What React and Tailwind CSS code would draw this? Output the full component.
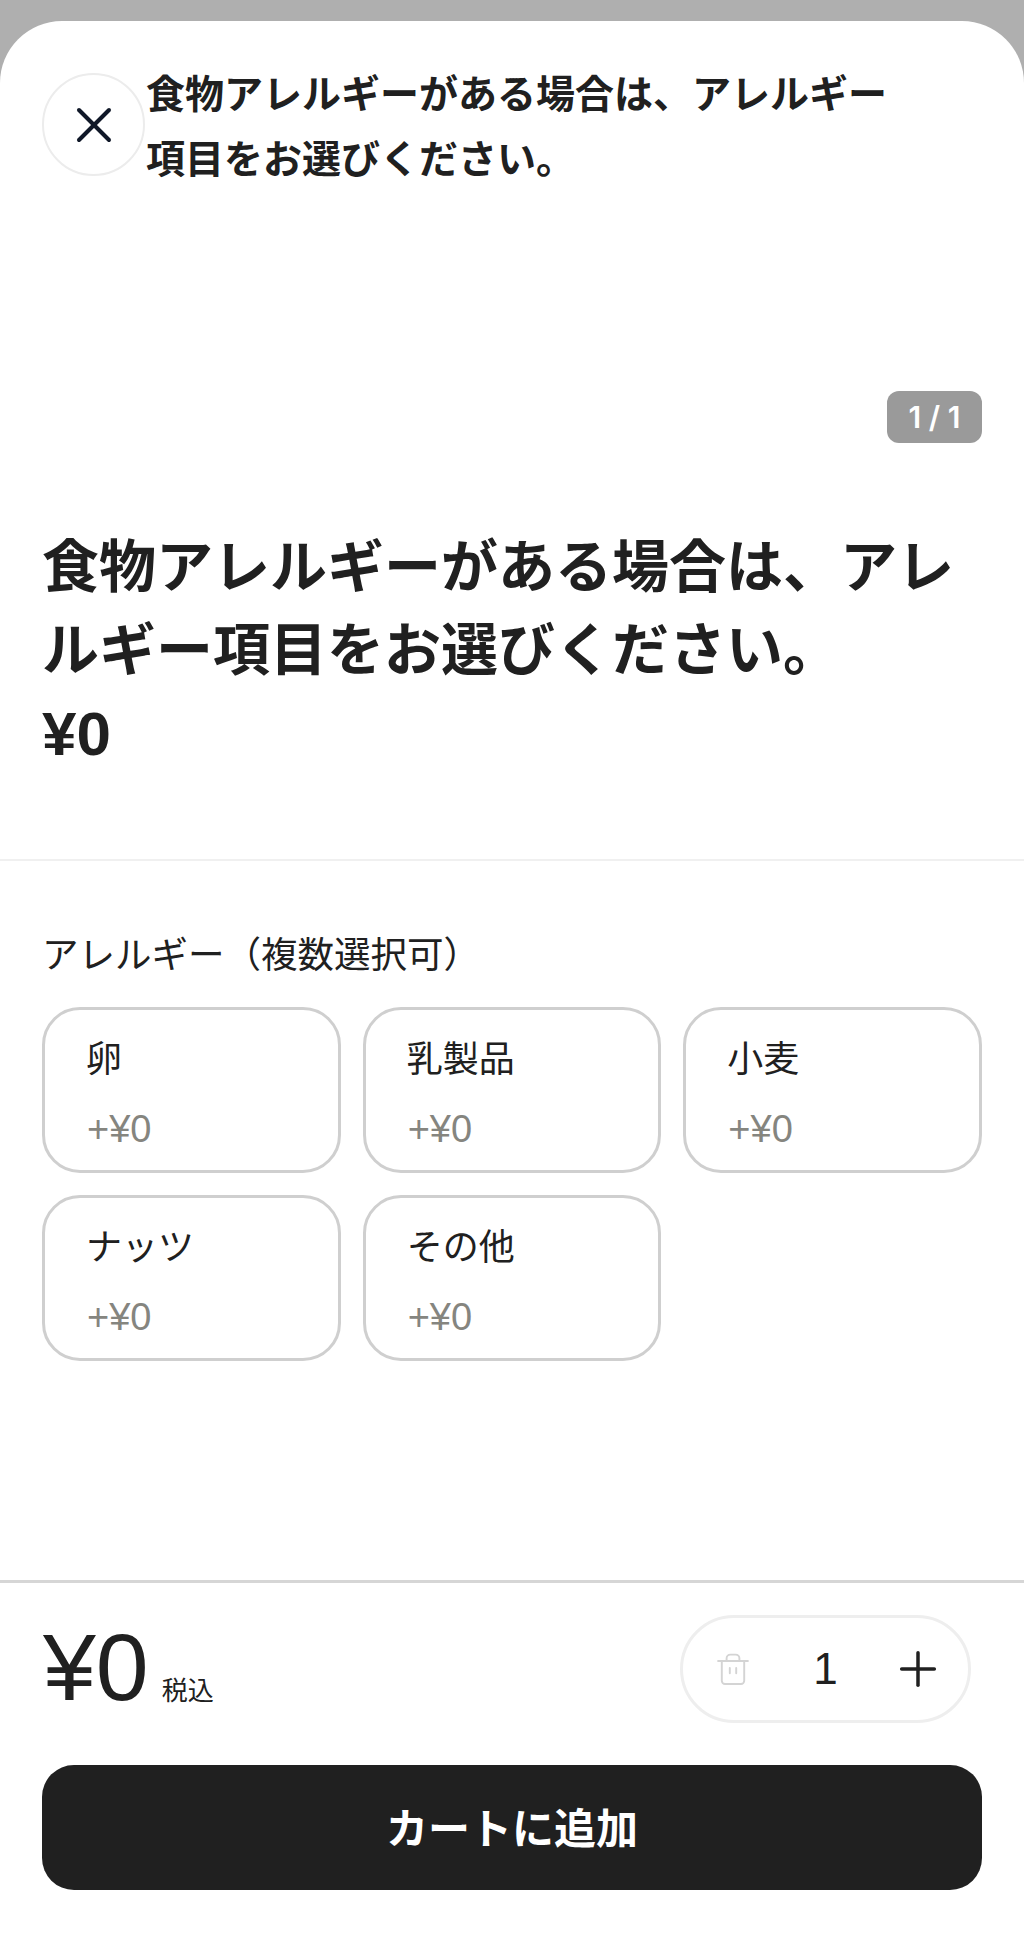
import { X, Plus } from 'lucide-react'

const options = [
  { name: '卵', price: '+¥0' },
  { name: '乳製品', price: '+¥0' },
  { name: '小麦', price: '+¥0' },
  { name: 'ナッツ', price: '+¥0' },
  { name: 'その他', price: '+¥0' },
]

const font = { fontFamily: '"Liberation Sans", "Noto Sans CJK JP", sans-serif' }

function TrashIcon() {
  return (
    <svg viewBox="0 0 30 30" className="w-[32px] h-[32px]" fill="none" stroke="#d4d4d4" strokeWidth="1.8" strokeLinecap="round" strokeLinejoin="round">
      <path d="M1 7.5H29" />
      <path d="M9 7V5a3.5 3.5 0 0 1 3.5-3.5h5A3.5 3.5 0 0 1 21 5v2" />
      <path d="M4.5 8v18a3 3 0 0 0 3 3h15a3 3 0 0 0 3-3V8" />
      <path d="M12 14v5M18 14v5" />
    </svg>
  )
}

export default function App() {
  return (
    <div style={font} className="h-[1953px] bg-[#afafaf] pt-[21px] flex flex-col text-[#202020]">
      <div className="flex-1 bg-white rounded-t-[62px] flex flex-col overflow-hidden">
        {/* Image area */}
        <div className="h-[454px] px-[42px] flex flex-col justify-between shrink-0">
          <div className="flex pt-[52px]">
            <button className="w-[103px] h-[103px] shrink-0 rounded-full border-2 border-[#ececec] flex items-center justify-center">
              <X className="w-[60px] h-[60px] text-[#101828]" strokeWidth={1.6} />
            </button>
            <p className="text-[39px] leading-[65px] font-bold -mt-[11px] ml-[1px] w-[760px]">食物アレルギーがある場合は、アレルギー項目をお選びください。</p>
          </div>
          <div className="flex justify-end pb-[32px]">
            <span className="w-[95px] h-[52px] rounded-[12px] bg-[#9a9a9a] text-white text-[30px] font-semibold font-['Inter'] flex items-center justify-center">1 / 1</span>
          </div>
        </div>

        {/* Title */}
        <div className="px-[42px] pt-[51px] pb-[84px] border-b-2 border-[#f0f0f0]">
          <h1 className="text-[57px] leading-[83px] font-bold">食物アレルギーがある場合は、アレルギー項目をお選びください。</h1>
          <p className="text-[62px] leading-[83px] font-bold">¥0</p>
        </div>

        {/* Options */}
        <div className="flex-1 px-[42px] pt-[70px]">
          <p className="text-[36.5px] leading-[50px] font-normal mb-[26px]">アレルギー（複数選択可）</p>
          <div className="grid grid-cols-3 gap-[22px]">
            {options.map(o => (
              <div key={o.name} className="h-[166px] rounded-[38px] border-[3px] border-[#cfcfcf] pl-[41px] pt-[25px]">
                <p className="text-[36px] leading-[50px]">{o.name}</p>
                <p className="text-[38px] leading-[50px] text-[#85857f] mt-[19px] ml-[1px]">{o.price}</p>
              </div>
            ))}
          </div>
        </div>

        {/* Footer */}
        <div className="border-t-[3px] border-[#d6d6d6] px-[42px] pt-[32px] pb-[63px]">
          <div className="flex items-center justify-between pr-[11px]">
            <div className="flex items-end gap-[13px] pl-[1px] -mt-[4px]">
              <span className="text-[95px] leading-[96px]">¥0</span>
              <span className="text-[26px] leading-[30px] mb-[9px]">税込</span>
            </div>
            <div className="w-[291px] h-[108px] rounded-full border-[3px] border-[#eeeeee] grid grid-cols-3 px-[4px] items-center justify-items-center">
              <TrashIcon />
              <span className="text-[44px] leading-none">1</span>
              <Plus className="w-[56px] h-[56px] text-[#202020]" strokeWidth={1.5} />
            </div>
          </div>
          <button className="w-full h-[125px] mt-[42px] pt-[4px] rounded-[32px] bg-[#202020] text-white text-[42px] font-bold">カートに追加</button>
        </div>
      </div>
    </div>
  )
}
